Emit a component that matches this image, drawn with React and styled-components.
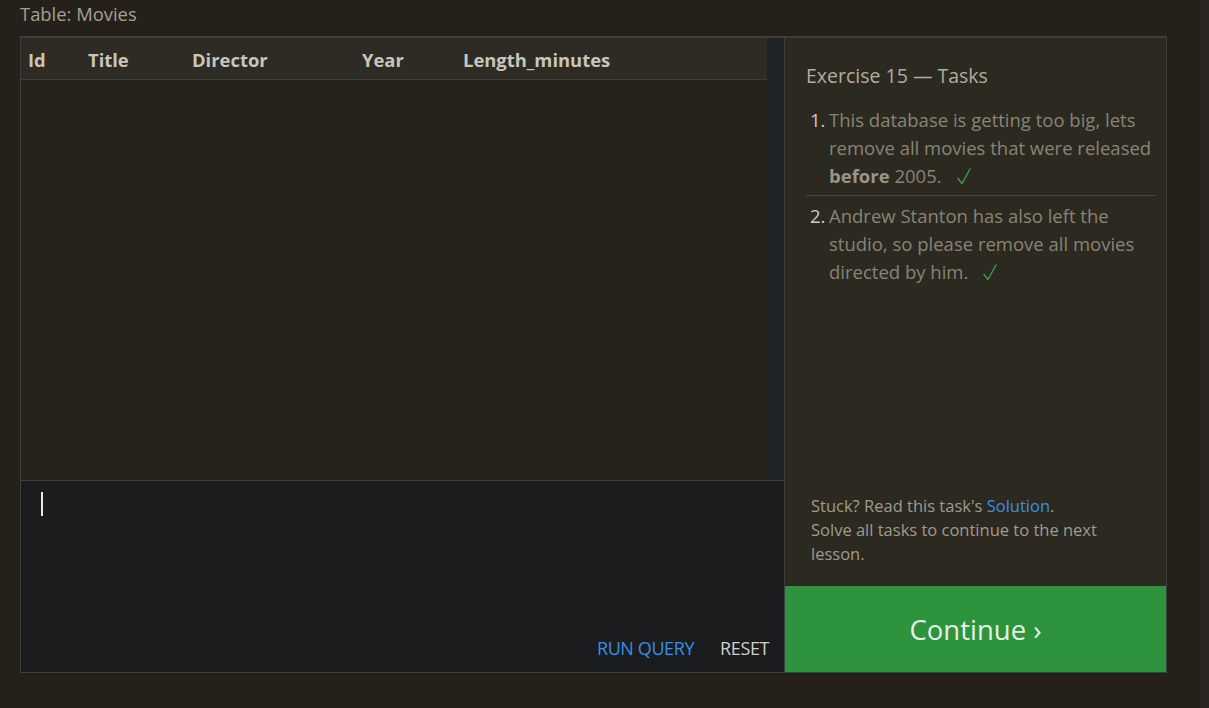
import React from "react";
import styled, { createGlobalStyle } from "styled-components";

const Global = createGlobalStyle`
  html, body { margin: 0; padding: 0; }
  body {
    background: #25211a;
    font-family: "Open Sans", "Noto Sans", sans-serif;
    overflow: hidden;
  }
`;

const Page = styled.div`
  width: 1209px;
  height: 708px;
  display: flex;
  background: #25211a;
`;

const Main = styled.div`
  flex: 1;
  display: flex;
  flex-direction: column;
  padding: 0 0 0 20px;
`;

const RightStrip = styled.div`
  width: 9px;
  background: #2b2521;
`;

const Caption = styled.div`
  height: 36px;
  line-height: 27px;
  font-size: 18.4px;
  color: #a59f92;
`;

const Frame = styled.div`
  width: 1145px;
  height: 634px;
  display: flex;
  border: 1px solid #3c3e3f;
  border-top: 2px solid #3c3e3f;
`;

const LeftCol = styled.div`
  width: 763px;
  display: flex;
  flex-direction: column;
  border-right: 1px solid #3c3e3f;
`;

const TableArea = styled.div`
  height: 442px;
  display: flex;
`;

const TableBody = styled.div`
  flex: 1;
  background: #27231b;
`;

const Scrollbar = styled.div`
  width: 17px;
  background: #202325;
`;

const HeaderRow = styled.div`
  height: 42px;
  display: grid;
  grid-template-columns: 60px 104px 170px 101px 1fr;
  align-items: center;
  padding: 2px 0 0 7px;
  box-sizing: border-box;
  background: #2d2b23;
  border-bottom: 1px solid #3d3e3c;
`;

const HeadCell = styled.div`
  font-weight: 700;
  font-size: 18.4px;
  color: #c9c5bd;
`;

const Editor = styled.div`
  flex: 1;
  display: flex;
  flex-direction: column;
  justify-content: space-between;
  background: #1b1c1e;
  border-top: 1px solid #3c3e3f;
  padding: 11px 15px 12px 20px;
`;

const Cursor = styled.div`
  width: 2px;
  height: 24px;
  background: #e8e8e8;
`;

const Actions = styled.div`
  display: flex;
  justify-content: flex-end;
  gap: 26px;
`;

const ActionButton = styled.span`
  font-size: 18px;
  letter-spacing: -0.4px;
  color: ${p => (p.$primary ? "#3a8ee6" : "#cfcfcf")};
`;

const RightCol = styled.div`
  flex: 1;
  display: flex;
  flex-direction: column;
  background: #2c2921;
`;

const Tasks = styled.div`
  flex: 1;
  padding: 24px 10px 0 21px;
`;

const TasksTitle = styled.div`
  font-size: 19.5px;
  color: #b2ad9f;
  line-height: 28px;
  margin-bottom: 16px;
`;

const TaskList = styled.ol`
  margin: 0;
  padding: 0;
  list-style: none;
`;

const Task = styled.li`
  display: flex;
  font-size: 18.5px;
  line-height: 28px;
  color: #888475;
  padding: 0 0 5px 4px;
  & + & {
    border-top: 1px solid #45443d;
    padding-top: 6px;
  }
`;

const TaskNum = styled.span`
  width: 19px;
  flex: none;
  color: #cfcac0;
`;

const TaskText = styled.span`
  b { color: #9a9586; font-weight: 700; }
`;

const CheckIcon = styled.svg`
  width: 14px;
  height: 17px;
  margin-left: 15px;
  vertical-align: -2px;
`;

const Check = () => (
  <CheckIcon viewBox="0 0 14 17" aria-label="done">
    <path d="M1 10.5 L5 15.5 L13 1" fill="none" stroke="#3b9a45" strokeWidth="1.5" strokeLinecap="round" strokeLinejoin="round" />
  </CheckIcon>
);

const Hint = styled.div`
  padding: 0 40px 20px 26px;
  font-size: 16.5px;
  line-height: 24px;
  color: #a09b8d;
  a { color: #3a8ee6; text-decoration: none; }
`;

const ContinueButton = styled.div`
  height: 86px;
  display: flex;
  align-items: center;
  justify-content: center;
  background: #2e933d;
  color: #e6efe4;
  font-size: 27.5px;
`;

export default function App() {
  return (
    <Page>
      <Global />
      <Main>
        <Caption>Table: Movies</Caption>
        <Frame>
          <LeftCol>
            <TableArea>
              <TableBody>
                <HeaderRow>
                  <HeadCell>Id</HeadCell>
                  <HeadCell>Title</HeadCell>
                  <HeadCell>Director</HeadCell>
                  <HeadCell>Year</HeadCell>
                  <HeadCell>Length_minutes</HeadCell>
                </HeaderRow>
              </TableBody>
              <Scrollbar />
            </TableArea>
            <Editor>
              <Cursor />
              <Actions>
                <ActionButton $primary>RUN QUERY</ActionButton>
                <ActionButton>RESET</ActionButton>
              </Actions>
            </Editor>
          </LeftCol>
          <RightCol>
            <Tasks>
              <TasksTitle>Exercise 15 — Tasks</TasksTitle>
              <TaskList>
                <Task>
                  <TaskNum>1.</TaskNum>
                  <TaskText>
                    This database is getting too big, lets remove all movies that were released <b>before</b> 2005.
                    <Check />
                  </TaskText>
                </Task>
                <Task>
                  <TaskNum>2.</TaskNum>
                  <TaskText>
                    Andrew Stanton has also left the studio, so please remove all movies directed by him.
                    <Check />
                  </TaskText>
                </Task>
              </TaskList>
            </Tasks>
            <Hint>
              Stuck? Read this task's <a href="#">Solution</a>.<br />
              Solve all tasks to continue to the next lesson.
            </Hint>
            <ContinueButton>Continue ›</ContinueButton>
          </RightCol>
        </Frame>
      </Main>
      <RightStrip />
    </Page>
  );
}
